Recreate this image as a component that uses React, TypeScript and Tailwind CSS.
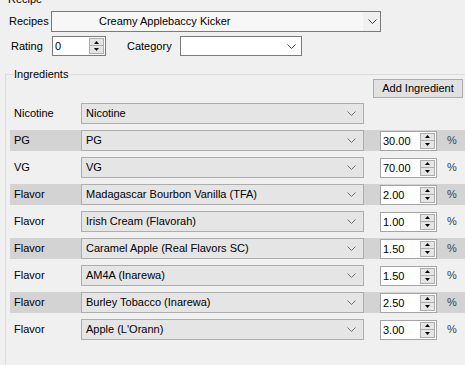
import React from "react";

function Chevron({ color = "#606060" }: { color?: string }) {
  return (
    <svg width="9" height="5" viewBox="0 0 9 5" className="block">
      <polyline points="0.5,0.5 4.5,4.5 8.5,0.5" fill="none" stroke={color} strokeWidth="1" />
    </svg>
  );
}

function Spinner() {
  return (
    <div className="flex flex-col w-[15px] h-[16px] mr-[1px] gap-0">
      <div className="h-[8px] bg-[#e5e5e5] border border-[#adadad] flex items-center justify-center">
        <svg width="5" height="3" viewBox="0 0 5 3" className="block">
          <polygon points="2.5,0 5,3 0,3" fill="#000" />
        </svg>
      </div>
      <div className="h-[8px] bg-[#e5e5e5] border border-[#adadad] border-t-0 flex items-center justify-center">
        <svg width="5" height="3" viewBox="0 0 5 3" className="block">
          <polygon points="0,0 5,0 2.5,3" fill="#000" />
        </svg>
      </div>
    </div>
  );
}

function Numeric({ value, w, border }: { value: string; w: string; border: string }) {
  return (
    <div className={`${w} h-[20px] bg-white border ${border} flex items-center`}>
      <div className="flex-1 pl-[2px] leading-[14px] text-black">{value}</div>
      <Spinner />
    </div>
  );
}

type Row = { label: string; item: string; value?: string; shaded: boolean };

const rows: Row[] = [
  { label: "Nicotine", item: "Nicotine", shaded: false },
  { label: "PG", item: "PG", value: "30.00", shaded: true },
  { label: "VG", item: "VG", value: "70.00", shaded: false },
  { label: "Flavor", item: "Madagascar Bourbon Vanilla (TFA)", value: "2.00", shaded: true },
  { label: "Flavor", item: "Irish Cream (Flavorah)", value: "1.00", shaded: false },
  { label: "Flavor", item: "Caramel Apple (Real Flavors SC)", value: "1.50", shaded: true },
  { label: "Flavor", item: "AM4A (Inarewa)", value: "1.50", shaded: false },
  { label: "Flavor", item: "Burley Tobacco (Inarewa)", value: "2.50", shaded: true },
  { label: "Flavor", item: "Apple (L'Orann)", value: "3.00", shaded: false },
];

export default function App() {
  return (
    <div
      className="w-[465px] h-[365px] overflow-hidden bg-[#f0f0f0] text-[11px] text-black flex flex-col"
      style={{ fontFamily: '"Liberation Sans", Arial, sans-serif' }}
    >
      <div className="h-[11px] shrink-0 flex flex-col">
        <div className="-mt-[8px] ml-[8px] leading-[14px]">Recipe</div>
      </div>

      <div className="flex items-center h-[21px] shrink-0">
        <div className="w-[51px] pl-[9px]">Recipes</div>
        <div className="w-[330px] h-[21px] border border-[#7a7a7a] bg-[#f0f0f0] flex items-center">
          <div className="flex-1 h-full bg-[#f7f7f7] pl-[47px] flex items-center">Creamy Applebaccy Kicker</div>
          <div className="w-[17px] flex items-center justify-center pl-[2px]">
            <Chevron color="#404040" />
          </div>
        </div>
      </div>

      <div className="flex items-center h-[20px] mt-[4px] shrink-0">
        <div className="w-[52px] pl-[11px]">Rating</div>
        <Numeric value="0" w="w-[54px]" border="border-[#7a7a7a]" />
        <div className="ml-[21px] w-[53px]">Category</div>
        <div className="w-[122px] h-[20px] border border-[#7a7a7a] bg-white flex items-center justify-end pr-[5px]">
          <Chevron color="#404040" />
        </div>
      </div>

      <fieldset className="ml-[5px] mt-[11px] w-[480px] h-[320px] shrink-0 border border-[#dcdcdc] border-r-0">
        <legend className="ml-[7px] px-[1px] leading-[14px]">Ingredients</legend>
        <div className="-mt-[2px] ml-[367px] w-[90px] h-[19px] border border-[#adadad] bg-[#e1e1e1] flex items-center justify-center">
          Add Ingredient
        </div>
        <div className="mt-[5px] flex flex-col gap-[6px]">
          {rows.map((r, i) => (
            <div
              key={i}
              className={`ml-[4px] h-[21px] flex items-center ${r.shaded ? "bg-[#d3d3d3]" : ""}`}
            >
              <div className="w-[71px] pl-[4px]">{r.label}</div>
              <div className="w-[283px] h-[21px] border border-[#adadad] bg-[#e5e5e5] flex items-center">
                <div className="flex-1 pl-[4px]">{r.item}</div>
                <div className="w-[17px] pr-[6px] flex items-center justify-center">
                  <Chevron color="#707070" />
                </div>
              </div>
              {r.value && (
                <>
                  <div className="ml-[16px]">
                    <Numeric value={r.value} w="w-[57px]" border="border-[#a5a5a5]" />
                  </div>
                  <div className="ml-[10px] text-[#404040]">%</div>
                </>
              )}
            </div>
          ))}
        </div>
      </fieldset>
    </div>
  );
}
